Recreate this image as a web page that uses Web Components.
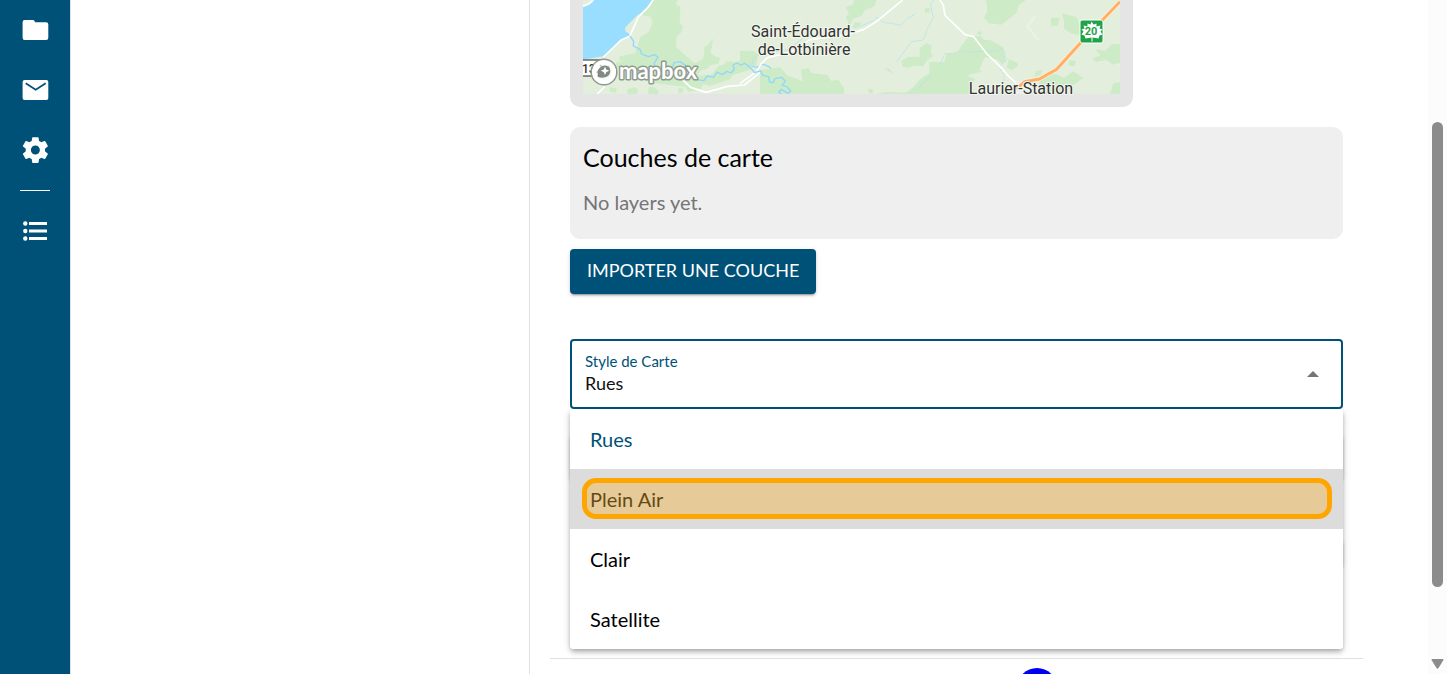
<!DOCTYPE html>
<html lang="fr">
<head>
<meta charset="utf-8">
<title>Couches de carte</title>
<style>
  html, body { margin: 0; height: 100%; overflow: hidden; background: #fff; }
  body { font-family: Lato, "Liberation Sans", sans-serif; color: #000; }
</style>
</head>
<body>
<app-shell>
  <side-nav slot="nav"></side-nav>
  <map-preview></map-preview>
  <layer-card heading="Couches de carte">No layers yet.</layer-card>
  <raised-button>IMPORTER UNE COUCHE</raised-button>
  <style-select></style-select>
  <page-end></page-end>
  <scroll-rail slot="rail"></scroll-rail>
</app-shell>

<script>
const define = (name, html, setup) => {
  customElements.define(name, class extends HTMLElement {
    constructor() {
      super();
      this.attachShadow({ mode: 'open' }).innerHTML = html;
    }
    connectedCallback() { if (setup) setup(this, this.shadowRoot); }
  });
};

define('app-shell', `
  <style>
    :host { display: flex; height: 100vh; overflow: hidden; }
    .list { flex: none; box-sizing: border-box; width: 459px; border-right: 1px solid #e0e0e0; }
    main { flex: 1; min-width: 0; padding: 0 65px 0 20px; overflow: hidden; }
  </style>
  <slot name="nav"></slot>
  <section class="list"></section>
  <main><slot></slot></main>
  <slot name="rail"></slot>`);

define('side-nav', `
  <style>
    :host { flex: none; display: block; width: 70px; background: #005178; border-right: 1px solid #e0e0e0; }
    nav { display: flex; flex-direction: column; align-items: center; }
    a { display: flex; align-items: center; justify-content: center; width: 70px; height: 60px; color: #fff; }
    svg { width: 30px; height: 30px; fill: currentColor; }
    hr { width: 30px; height: 1px; margin: 10px 0; border: 0; background: #fff; }
  </style>
  <nav>
    <a href="#dossiers" aria-label="Dossiers"><svg viewBox="0 0 30 30"><path d="M4.700 5h8.300q1 0 1.500 1l.7 1.300h10.800q2.300 0 2.300 2.200v13.300q0 2.200-2.200 2.200H4.700Q2.600 25 2.600 22.800V7.200Q2.600 5 4.700 5z"/></svg></a>
    <a href="#messages" aria-label="Messages"><svg viewBox="0 0 30 30"><rect x="2.600" y="5" width="25.700" height="20" rx="2"/><path d="M5.700 8.300l10 6.500 10-6.500" fill="none" stroke="#005178" stroke-width="1.700"/></svg></a>
    <a href="#reglages" aria-label="Réglages"><svg viewBox="0 0 24 24"><path transform="translate(12.300 12) scale(1.030) translate(-12 -12)" d="M19.430 12.980c.04-.32.07-.64.07-.98s-.03-.66-.07-.98l2.110-1.650c.19-.15.24-.42.12-.64l-2-3.460c-.12-.22-.39-.3-.61-.22l-2.490 1c-.52-.4-1.080-.73-1.690-.98l-.38-2.650C14.460 2.180 14.250 2 14 2h-4c-.25 0-.46.18-.49.42l-.38 2.650c-.61.25-1.170.59-1.690.98l-2.490-1c-.23-.09-.49 0-.61.22l-2 3.460c-.13.22-.07.49.12.64l2.110 1.650c-.04.32-.07.65-.07.98s.03.66.07.98l-2.110 1.650c-.19.15-.24.42-.12.64l2 3.460c.12.22.39.3.61.22l2.490-1c.52.4 1.080.73 1.690.98l.38 2.650c.03.24.24.42.49.42h4c.25 0 .46-.18.49-.42l.38-2.650c.61-.25 1.170-.59 1.690-.98l2.490 1c.23.09.49 0 .61-.22l2-3.460c.12-.22.07-.49-.12-.64l-2.110-1.650zM12 15.500c-1.930 0-3.500-1.570-3.500-3.500s1.570-3.500 3.500-3.500 3.500 1.570 3.500 3.500-1.570 3.500-3.500 3.500z"/></svg></a>
    <hr>
    <a href="#liste" aria-label="Liste"><svg viewBox="0 0 30 30"><circle cx="5.300" cy="7.500" r="2.200"/><circle cx="5.300" cy="15" r="2.200"/><circle cx="5.300" cy="22.500" r="2.200"/><path d="M9 6h18v3H9zM9 13.500h18v3H9zM9 21h18v3H9z"/></svg></a>
  </nav>`);

/* Map shapes are drawn in three tiles, each at a third of its own unit. */
define('map-preview', `
  <style>
    :host { display: block; box-sizing: border-box; max-width: 563px; margin: 0 20px; padding: 0 13px 13px;
      background: #e5e5e5; border-radius: 0 0 10px 10px; }
    .map { display: block; width: 100%; height: 94px; overflow: visible; }
    .tile { overflow: hidden; }
    .label { font: 16px Roboto, sans-serif; fill: #333; stroke: #f2f7ee; stroke-width: 2px; paint-order: stroke; text-anchor: middle; }
    .logo { font: 700 22px Lato, sans-serif; fill: #fff; stroke: #8f9a8f; stroke-width: 3px; paint-order: stroke; stroke-linejoin: round; }
    .small { font: 500 12px Roboto, sans-serif; fill: #333; }
    .route { font: 700 11px Roboto, sans-serif; fill: #1fa34a; text-anchor: middle; }
    .g { fill: #ceebc8; } .road { fill: none; stroke: #fff; stroke-width: 5; stroke-linejoin: round; }
    .river { fill: none; stroke: #8fd8fb; stroke-width: 4; stroke-linejoin: round; }
    .creek { fill: none; stroke: #b0e0ec; stroke-width: 2; }
  </style>
  <svg class="map" viewBox="0 0 537 94" preserveAspectRatio="xMinYMax meet" role="img" aria-label="Carte">
   <svg class="tile" width="537" height="94">
    <rect width="537" height="94" fill="#e3efdc"/>
    <g transform="translate(-13 0) scale(.333333)">
      <path class="g" d="M255 0h68l-6 12 14 8-2 50 10 8-6 20-14 14v30l54 48 26-12 5-26-4-8 14-10 15-20-3 28-5 15 12 12 17 5-5 17-24 5-10 10-20 7-8 13h36l8-5 19-24 18-4 5-9 26 2 22-6 20 10v20l-50 16-7 12-60 20-20-6-10 18-35 5-10-15-90-10-50-15-20-15-20-15-2-18-15-8v-10l22-4 10 8 12-7 10-24 8-30 26-16 12-28-6-18-26-4 2-24-8-10z"/>
      <path class="g" d="M165 166l25-6 6 12-4 15-24 10-33 8 4-18 22-4zM192 200l16-8 16 8-6 12-22 0zM120 262l20 2-2 14-18-2zM172 268l22-6 10 8-4 12h-28zM235 262l16-2 16 14-4 8h-28zM325 265h16l-4 14-12 2z"/>
      <path d="M39 0h210L210 42l-30 65-24 12-24 24-34 26-59 10z" fill="#99ddff"/>
      <path d="M180 68l28-28-26 64-16-10v-12z" fill="#e3efdc"/>
      <path d="M39 0h32L56 15l-17 7z" fill="#e3efdc"/><path class="road" d="M70 0L56 12 39 18"/>
      <path class="road" d="M249 0l-16 24-27 25-27 60-24 10-55 52M340 242l22 20 46 15 65-18 50-4 47-37M82 282l22-22"/>
      <path class="river" d="M180 108l11 16-1 14 20 10 5 14 20 8 20-6 9 8-12 18 2 18 20-8 15 12 18-7 5-17 18-3 18 12 10 22 16-2 6 22 22 3 9-14 20 4 10-16 16 8 14-10 12 5 10-12-4-12 12-6 15 8 25 0 20 5 16-10 20 8 14 12 9 2"/>
    </g>
    <g transform="translate(157 0) scale(.333333)">
      <path class="g" d="M318 20l20-6 5-14h66l-4 18-30 12-10 18-26 8-6 12-6 15-4-20-6-14 10-6zM345 66l22 4-20 16-10-4zM0 152l40 0 13 10-3 32-14 4-6 14L0 200zM60 210l60-8 22 24 45 18-4-36 24-4 6 15 50 6 10 18 22-4 17 26 0 17H60zM485 182l20-12 35 0-2-25 22-16 16 8-4 20 8 12-18 10-12 20-28-2-20 6-16-4zM428 204l20 2 12 16-24-14zM384 268l13-2 2 12-10 4zM408 282l30-6 60 2 22-16 20-24 18-12 42-24v80zM555 24h14v14h-14z"/>
      <path class="creek" d="M355 82l45-20 10-10 22 16 24 2 24 6 22-20 24-14M582 0l-10 14 8 40-18 32-12 34-36 5-20 28-24 32M600 198l-38 40-34 34M188 116l-45 34-82 12-20 12-4 18-10 6"/>
      <path class="road" d="M488 0l-78 64-40 25-50 15-110 15-60 38-68 16-20 20-12 22-50 35"/>
      <path class="river" d="M0 196l14-6 18 14 12 14 18-6 6 14 18 4 2 16 12 2 4-12 22-4 10 12-10 12 14 4 12 12-8 8-20-12-8 8 18 14"/>
    </g>
    <g transform="translate(357 0) scale(.333333)">
      <path class="g" d="M138 0h120l-20 14-10 26-44 34-38-4-14-16 10-22zM332 54l28 0-8 24h-18zM366 40l44 12 10 22 0 32-28-6-20-14 0-22zM116 92l10 6-4 8-12-4zM88 108h32l14 12 16 0 40 22 8 40-12 10-16-14-36-6-16 38 10 4-40 10-60 22-60-20v-40h46l4-24 34-6 14-20zM206 178l22 8 8 10-18 14-18-6zM388 180l20 4-4 14-18 0zM286 214l20-4-2 14-20 6zM466 148l30 4 20-20h24v56l-22 6-20-14-30 6-12-10 26-10zM300 240l40-20 32 14 28-20 30 20-34 24-22 20-80 6zM0 226l70-4 34 14-14 46H0zM520 250l20-4v36h-30z"/>
      <path d="M286 48l-24 30 34 44" fill="none" stroke="#ebf1e4" stroke-width="9"/>
      <path d="M228 242h40v40h-44z" fill="#edf0ec"/>
      <path class="creek" stroke-dasharray="8 3" d="M0 196l14-36 24 2 24-10 26 6 30-4 54 0 12-8 14 12-6 10 10 10-22 20 2 12 10 16 0 18"/>
      <path class="road" d="M0 0l10 16 5 30 60 58 26 6 40 52 42 40 22 26 22 20"/>
      <path d="M540 5L424 126 350 208l-52 29-44 8-25 22" fill="none" stroke="#fff0dc" stroke-width="13"/>
      <path d="M540 5L424 126 350 208l-52 29-44 8-25 22" fill="none" stroke="#ffb066" stroke-width="9"/>
    </g>
    <path d="M-4 60h24q6 0 6 4v8q0 4-6 4h-24z" fill="#fff" stroke="#222"/>
   </svg>
    <rect x="497" y="20" width="23" height="23" rx="2" fill="#1fa34a" stroke="#fff"/>
    <path d="M508.500 21.500l2 3 3-1v3l4-1-1 3 3 1-2 2 2 3-3 1-1 3-6-1v4h-1v-4l-6 1-1-3-3-1 2-3-2-2 3-1-1-3 4 1v-3l3 1z" fill="#fff"/>
    <text class="route" x="508" y="35">20</text>
    <text class="label" x="220" y="37">Saint-Édouard-</text>
    <text class="label" x="221" y="55">de-Lotbinière</text>
    <text class="label" x="438" y="94">Laurier-Station</text>
    <text class="small" x="-1" y="73">132</text>
    <circle cx="21" cy="72" r="12.800" fill="none" stroke="#8f9a8f" stroke-width="1.600"/>
    <circle cx="21" cy="72" r="10" fill="#fff" fill-opacity=".7" stroke="#fff" stroke-width="4"/>
    <path d="M15 77c-1-6 0-8 3-10 4-3 8-1 9 2 1 4-1 7-4 8-3 1-5 1-8 0z" fill="#7f8a80"/>
    <path d="M22 66.500l1.300 3 3 1.300-3 1.300-1.300 3-1.300-3-3-1.300 3-1.300z" fill="#fff"/>
    <text class="logo" x="36" y="79">mapbox</text>
  </svg>`);

define('layer-card', `
  <style>
    :host { display: block; margin: 20px 20px 10px; padding: 12px 13px 22px; background: #efefef; border-radius: 10px; }
    h2 { margin: 0 0 12px; font-size: 25px; line-height: 36px; font-weight: 400; }
    p { margin: 0; font-size: 20px; line-height: 30px; color: #757575; }
  </style>
  <h2></h2><p><slot></slot></p>`,
  (el, root) => { root.querySelector('h2').textContent = el.getAttribute('heading'); });

define('raised-button', `
  <style>
    :host { display: block; margin: 0 20px; }
    button { display: block; height: 45px; padding: 0 17px 3px; border: 0; border-radius: 4px; background: #005178; color: #fff;
      font: inherit; font-size: 18px; line-height: 24px;
      box-shadow: 0 3px 1px -2px rgba(0,0,0,.2), 0 2px 2px rgba(0,0,0,.14), 0 1px 5px rgba(0,0,0,.12); }
  </style>
  <button type="button"><slot></slot></button>`);

define('style-select', `
  <style>
    :host { display: block; margin: 45px 20px 0; }
    .anchor { position: relative; }
    .field { display: flex; align-items: center; box-sizing: border-box; height: 70px; padding: 0 22px 0 13px;
      border: 2px solid #005178; border-radius: 4px; background: #fff; }
    .stack { flex: 1; display: flex; flex-direction: column; padding-bottom: 2px; }
    label { font-size: 15px; line-height: 20px; color: #005178; }
    select { appearance: none; width: 100%; height: 24px; margin: 0; padding: 0; border: 0; outline: 0; background: none;
      font: inherit; font-size: 18px; line-height: 24px; color: #111; }
    svg { width: 12px; height: 6px; fill: #757575; }
    .shade { position: absolute; z-index: 1; top: 100%; left: 0; right: 0; height: 240px; border-radius: 4px;
      box-shadow: 0 2px 4px -1px rgba(0,0,0,.2), 0 4px 5px rgba(0,0,0,.14), 0 1px 10px rgba(0,0,0,.12); clip-path: inset(0 -12px -12px -12px); }
    .panel { position: absolute; z-index: 2; top: 100%; left: 0; right: 0; background: #fff; border-radius: 4px; overflow: hidden; }
    button { position: relative; display: block; width: 100%; height: 60px; padding: 0 20px; border: 0; background: #fff;
      font: inherit; font-size: 20px; line-height: 30px; text-align: left; color: #000; }
    .selected { color: #005178; }
    .active { background: #dcdcdc; color: #222; }
    .active::after { content: ""; position: absolute; inset: 9px 11px 10px 12px; border: 5px solid #ffa500; border-radius: 14px;
      background: rgba(255,165,0,.3); background-clip: padding-box; }
    .under { display: flex; flex-direction: column; padding-top: 26px; gap: 60px; }
    .under div { height: 45px; border-radius: 4px; box-shadow: 0 2px 2px rgba(0,0,0,.14), 0 1px 5px rgba(0,0,0,.12); }
    .under div + div { align-self: flex-end; width: 50%; height: 27px; }
  </style>
  <div class="anchor">
    <div class="field">
      <div class="stack">
        <label for="style">Style de Carte</label>
        <select id="style"><option>Rues</option><option>Plein Air</option><option>Clair</option><option>Satellite</option></select>
      </div>
      <svg viewBox="0 0 12 6"><path d="M0 6l6-6 6 6z"/></svg>
    </div>
    <div class="shade"></div>
    <div class="panel" role="listbox" aria-label="Style de Carte">
      <button type="button" role="option" aria-selected="true" class="selected">Rues</button>
      <button type="button" role="option" class="active">Plein Air</button>
      <button type="button" role="option">Clair</button>
      <button type="button" role="option">Satellite</button>
    </div>
  </div>
  <div class="under"><div></div><div></div></div>`,
  (el, root) => {
    const options = [...root.querySelectorAll('[role=option]')];
    options.forEach((option, i) => option.addEventListener('click', () => {
      root.querySelector('select').selectedIndex = i;
      options.forEach(o => o.classList.toggle('selected', o === option));
    }));
  });

define('page-end', `
  <style>
    :host { display: block; margin-top: 91px; border-top: 1px solid #e0e0e0; }
    .dot { width: 40px; height: 40px; margin: 9px auto 0; border-radius: 50%; background: #0000f0; transform: translateX(80px); }
  </style>
  <div class="dot"></div>`);

define('scroll-rail', `
  <style>
    :host { flex: none; display: flex; flex-direction: column; align-items: center; box-sizing: border-box; width: 19px; padding: 122px 0 5px; background: #fcfcfc; }
    .thumb { flex: 0 0 465px; width: 11px; border-radius: 6px; background: #8b8b8b; }
    svg { width: 13px; height: 10px; margin-top: auto; fill: #8b8b8b; }
  </style>
  <div class="thumb"></div>
  <svg viewBox="0 0 13 10"><path d="M1.500 0h10q1.500 0 .8 1.300L7.500 9q-1 1.300-2 0L.7 1.300Q0 0 1.500 0z"/></svg>`);
</script>
</body>
</html>
